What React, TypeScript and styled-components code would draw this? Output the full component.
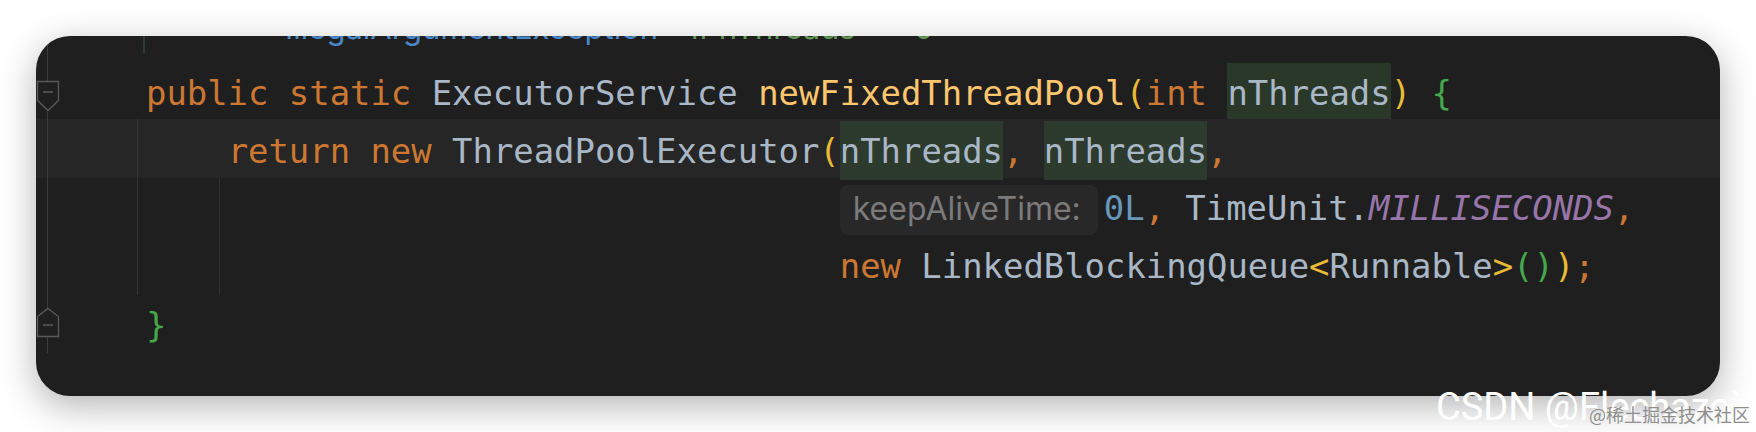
import styled, { createGlobalStyle } from "styled-components";

const GlobalStyle = createGlobalStyle`
  html, body {
    margin: 0;
    padding: 0;
    background: #ffffff;
  }
  body {
    width: 1756px;
    height: 432px;
    overflow: hidden;
  }
`;

const Page = styled.div`
  position: relative;
  width: 1756px;
  height: 432px;
  padding: 36px;
  box-sizing: border-box;
`;

const Editor = styled.div`
  width: 1684px;
  height: 360px;
  background: #1f1f1f;
  border-radius: 34px;
  overflow: hidden;
  box-shadow: 0 10px 36px rgba(0, 0, 0, 0.3);
`;

const Lines = styled.div`
  margin-top: -34px;
  display: flex;
  flex-direction: column;
`;

const Row = styled.div<{ $current?: boolean }>`
  display: flex;
  height: 58.5px;
  background: ${({ $current }) => ($current ? "#262626" : "transparent")};
`;

const Gutter = styled.div`
  flex: none;
  width: 96px;
  display: flex;
  align-items: flex-start;
  background: linear-gradient(#3b3b3b, #3b3b3b) 11px 0 / 1px 100% no-repeat;
`;

const FoldIcon = styled.svg<{ $top: number }>`
  display: block;
  margin-top: ${({ $top }) => $top}px;
`;

type Guide = { x: number; color: string };

const Code = styled.div<{ $guides?: Guide[] }>`
  flex: 1;
  box-sizing: border-box;
  padding: 2px 0 0 14px;
  font-family: "DejaVu Sans Mono", "Liberation Mono", monospace;
  font-size: 33.9px;
  line-height: 58.5px;
  white-space: pre;
  color: #a9b7c6;
  background: ${({ $guides }) =>
    $guides && $guides.length
      ? $guides
          .map(
            (g) =>
              `linear-gradient(${g.color}, ${g.color}) ${g.x}px 0 / 1px 100% no-repeat`
          )
          .join(", ")
      : "none"};
`;

const Kw = styled.span`
  color: #cc7832;
`;

const Fn = styled.span`
  color: #ffc66d;
`;

const Num = styled.span`
  color: #6897bb;
`;

const Const = styled.span`
  color: #9876aa;
  font-style: italic;
`;

const Bracket = styled.span<{ $level: 1 | 2 }>`
  color: ${({ $level }) => ($level === 1 ? "#e8ba36" : "#45a84c")};
`;

const Param = styled.span<{ $on?: boolean }>`
  display: inline-block;
  padding-top: 4px;
  line-height: 54.5px;
  background: ${({ $on }) => ($on ? "#2c3b2d" : "#293829")};
`;

const Hint = styled.span`
  display: inline-block;
  box-sizing: border-box;
  width: 258px;
  height: 50px;
  line-height: 48px;
  padding-left: 13px;
  margin-right: 6px;
  border-radius: 8px;
  background: #282828;
  color: #7b7b7b;
  font-family: Inter, "Noto Sans", sans-serif;
  font-size: 32px;
  font-style: normal;
`;

const DocBlock = styled.div`
  margin: -2px 0 0 -3px;
  height: 51px;
  border-left: 2px solid #2b3d30;
  padding-left: 140px;
  font-family: Inter, "Noto Sans", sans-serif;
  font-size: 31px;
  line-height: 52.5px;
  white-space: pre;
`;

const DocLink = styled.span`
  color: #4a88c7;
`;

const DocText = styled.span`
  color: #629755;
`;

const Watermark = styled.div`
  position: absolute;
  left: 1436px;
  top: 388px;
  font-family: Roboto, "Liberation Sans", sans-serif;
  font-size: 38px;
  line-height: 38px;
  color: #ffffff;
  white-space: nowrap;
`;

const SiteMark = styled.div`
  position: absolute;
  left: 1589px;
  top: 405px;
  font-family: "Noto Sans CJK SC", sans-serif;
  font-size: 18px;
  line-height: 18px;
  color: #8e8e8e;
  white-space: nowrap;
`;

const FoldStart = () => (
  <FoldIcon $top={19.5} width="24" height="32" viewBox="0 0 24 32">
    <path
      d="M1.5 1.5 H22.5 V20.5 L12 30.5 L1.5 20.5 Z"
      fill="#1f1f1f"
      stroke="#595959"
      strokeWidth="1.4"
    />
    <path d="M7 12 H17" stroke="#595959" strokeWidth="1.4" />
  </FoldIcon>
);

const FoldEnd = () => (
  <FoldIcon $top={12.8} width="24" height="32" viewBox="0 0 24 32">
    <path
      d="M12 1.5 L22.5 9.5 V29.5 H1.5 V9.5 Z"
      fill="#1f1f1f"
      stroke="#595959"
      strokeWidth="1.4"
    />
    <path d="M7 18 H17" stroke="#595959" strokeWidth="1.4" />
  </FoldIcon>
);

const Comma = ({ children }: { children: string }) => <Kw>{children}</Kw>;

const bodyGuides: Guide[] = [{ x: 5, color: "#2a3d2f" }];
const wrapGuides: Guide[] = [
  { x: 5, color: "#2a3d2f" },
  { x: 87, color: "#303030" },
];
const indent = " ".repeat(34);

export default function App() {
  return (
    <>
      <GlobalStyle />
      <Page>
        <Editor>
          <Lines>
            <Row>
              <Gutter />
              <Code>
                <DocBlock>
                  <DocLink>IllegalArgumentException</DocLink>
                  <DocText>{" – if nThreads <= 0"}</DocText>
                </DocBlock>
              </Code>
            </Row>
            <Row>
              <Gutter>
                <FoldStart />
              </Gutter>
              <Code>
                <Kw>public static </Kw>
                {"ExecutorService "}
                <Fn>newFixedThreadPool</Fn>
                <Bracket $level={1}>(</Bracket>
                <Kw>int </Kw>
                <Param>nThreads</Param>
                <Bracket $level={1}>)</Bracket>{" "}
                <Bracket $level={2}>{"{"}</Bracket>
              </Code>
            </Row>
            <Row $current>
              <Gutter />
              <Code $guides={bodyGuides}>
                {"    "}
                <Kw>return new </Kw>
                {"ThreadPoolExecutor"}
                <Bracket $level={1}>(</Bracket>
                <Param $on>nThreads</Param>
                <Comma>{", "}</Comma>
                <Param $on>nThreads</Param>
                <Comma>,</Comma>
              </Code>
            </Row>
            <Row>
              <Gutter />
              <Code $guides={wrapGuides}>
                {indent}
                <Hint>keepAliveTime:</Hint>
                <Num>0L</Num>
                <Comma>{", "}</Comma>
                {"TimeUnit."}
                <Const>MILLISECONDS</Const>
                <Comma>,</Comma>
              </Code>
            </Row>
            <Row>
              <Gutter />
              <Code $guides={wrapGuides}>
                {indent}
                <Kw>new </Kw>
                {"LinkedBlockingQueue"}
                <Bracket $level={1}>{"<"}</Bracket>
                {"Runnable"}
                <Bracket $level={1}>{">"}</Bracket>
                <Bracket $level={2}>()</Bracket>
                <Bracket $level={1}>)</Bracket>
                <Comma>;</Comma>
              </Code>
            </Row>
            <Row>
              <Gutter>
                <FoldEnd />
              </Gutter>
              <Code>
                <Bracket $level={2}>{"}"}</Bracket>
              </Code>
            </Row>
          </Lines>
        </Editor>
        <Watermark>CSDN @Flechazo`</Watermark>
        <SiteMark>@稀土掘金技术社区</SiteMark>
      </Page>
    </>
  );
}
